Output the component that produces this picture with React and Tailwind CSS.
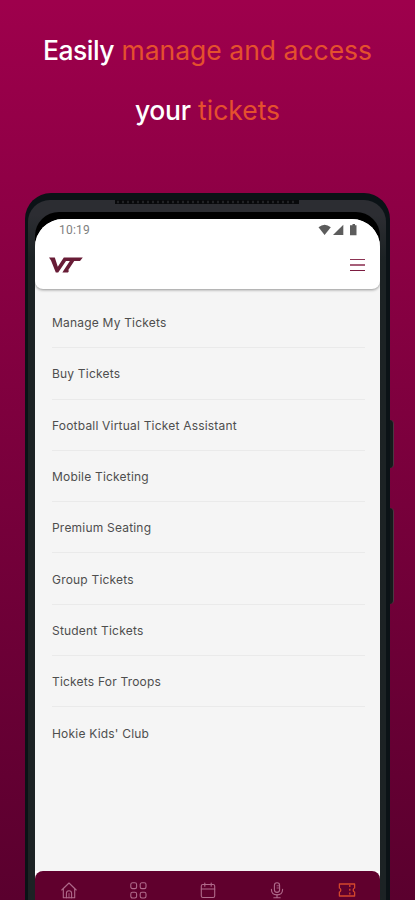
import React from 'react';

const tickets = [
  'Manage My Tickets',
  'Buy Tickets',
  'Football Virtual Ticket Assistant',
  'Mobile Ticketing',
  'Premium Seating',
  'Group Tickets',
  'Student Tickets',
  'Tickets For Troops',
  "Hokie Kids' Club",
];

function HomeIcon() {
  return (
    <svg viewBox="0 0 16 17" className="w-4 h-[17px]" fill="none" stroke="currentColor" strokeWidth="1.1" strokeLinejoin="round" strokeLinecap="round">
      <path d="M0.8 8 L8 1 L15.2 8" />
      <path d="M2.3 7 V15.8 H13.7 V7" />
      <path d="M5.4 15.8 V11.2 Q5.4 8.8 8 8.8 Q10.6 8.8 10.6 11.2 V15.8" />
      <path d="M8 11.5 V15.8" strokeWidth="0.8" />
    </svg>
  );
}

function GridIcon() {
  return (
    <svg viewBox="0 0 17 17" className="w-[17px] h-[17px]" fill="none" stroke="currentColor" strokeWidth="1.1">
      <rect x="0.8" y="0.8" width="5.8" height="5.8" rx="1.7" />
      <rect x="10.2" y="0.8" width="5.8" height="5.8" rx="1.7" />
      <rect x="0.8" y="10.2" width="5.8" height="5.8" rx="1.7" />
      <rect x="10.2" y="10.2" width="5.8" height="5.8" rx="1.7" />
    </svg>
  );
}

function CalendarIcon() {
  return (
    <svg viewBox="0 0 16 17" className="w-4 h-[17px]" fill="none" stroke="currentColor" strokeWidth="1.1" strokeLinecap="round">
      <rect x="1.3" y="2.5" width="13.4" height="13" rx="1.6" />
      <path d="M1.3 7 H14.7" />
      <path d="M4.8 1 V4.3 M11.2 1 V4.3" />
    </svg>
  );
}

function MicIcon() {
  return (
    <svg viewBox="0 0 16 17" className="w-4 h-[17px]" fill="none" stroke="currentColor" strokeWidth="1.1" strokeLinecap="round">
      <rect x="5.4" y="0.8" width="5.2" height="9.6" rx="2.6" />
      <path d="M8 3.8 H10 M8 6 H10" strokeWidth="0.8" />
      <path d="M2.4 7.4 Q2.6 12.8 8 12.9 Q13.4 12.8 13.6 7.4" />
      <path d="M8 12.9 V15.8 M4.8 15.8 H11.2" />
    </svg>
  );
}

function TicketIcon() {
  return (
    <svg viewBox="0 0 18 14" className="w-[18px] h-3.5" fill="none" stroke="currentColor" strokeWidth="1.3" strokeLinejoin="round">
      <path d="M1.4 1 H16.6 V5 Q15.2 5.4 15.2 7 Q15.2 8.6 16.6 9 V13 H1.4 V9 Q2.8 8.6 2.8 7 Q2.8 5.4 1.4 5 Z" />
      <path d="M11.8 2 V13" strokeDasharray="2 1.8" />
    </svg>
  );
}

function Logo() {
  return (
    <svg viewBox="0 0 34 16" className="w-[34px] h-4" fill="#681c36">
      {/* V */}
      <path d="M0 0.4 H5.8 L8.8 9.8 L14.8 0.4 H33.8 L31 4 H17 L9.2 15.4 H6.8 L2 3.4 Z" />
      {/* T stem */}
      <path d="M21 3.8 H25.4 L19 13.6 H20.2 L19 15.4 H13.4 L14.6 13.6 Z" />
    </svg>
  );
}

function StatusBar() {
  return (
    <div className="flex items-center justify-between h-[23px] pl-6 pr-[22px] text-[#808080]">
      <span className="font-[Roboto,sans-serif] text-xs tracking-[0.2px]">10:19</span>
      <svg viewBox="0 0 40 12" className="w-10 h-3" fill="#5c5c5c">
        <path d="M0.5 3.2 Q6.6 -1.8 12.8 3.2 L6.6 11 Z" />
        <path d="M25.3 0.8 V11 H15 Z" />
        <path d="M33 1.3 H34.5 V0 H37 V1.3 H38.5 V11.3 H32 V1.3 Z" />
      </svg>
    </div>
  );
}

export default function App() {
  return (
    <div className="w-full h-[900px] overflow-hidden bg-gradient-to-b from-[#9e004c] to-[#5a002e] font-[Inter,sans-serif]">
      <h1 className="h-[193px] pt-5 text-center text-[26.5px] leading-[60px] text-[#e4502e] font-normal whitespace-nowrap">
        <span className="text-white font-medium tracking-[-0.5px]">Easily</span> manage and access
        <br />
        <span className="text-white font-medium tracking-[-0.3px]">your</span> tickets
      </h1>

      <div className="flex ml-[25px]">
        {/* Phone body */}
        <div className="w-[365px] h-[740px] shrink-0 rounded-t-[26px] bg-[#0b1216] pl-[3px] pr-[4px] pt-[7px]">
          <div className="h-[733px] rounded-t-[22px] bg-gradient-to-b from-[#2c2d32] from-2% to-[#1c2224] to-8%">
            <div className="h-3 flex justify-center">
              <svg viewBox="0 0 184 4" className="w-[184px] h-1">
                <rect width="184" height="4" fill="#08090b" />
                <path d="M2 2 H182" stroke="#222326" strokeWidth="2.5" strokeDasharray="2 3" />
              </svg>
            </div>

            <div className="ml-[7px] w-[345px] h-[720px] rounded-t-[24px] bg-black pt-[6.5px]">
              <div className="h-[714px] rounded-t-[28px] bg-[#f5f5f5] overflow-hidden flex flex-col">
                <div className="h-[70px] shrink-0 bg-white rounded-b-lg shadow-[0_1px_3px_rgba(0,0,0,0.4)]">
                  <StatusBar />
                  <div className="flex items-center justify-between pl-[14px] pr-[15.5px] h-[47px]">
                    <Logo />
                    <div className="w-[15px] flex flex-col gap-1">
                      <span className="h-[1.5px] bg-[#8c3454]" />
                      <span className="h-[1.5px] bg-[#a65f79]" />
                      <span className="h-[1.5px] bg-[#7c1c40]" />
                    </div>
                  </div>
                </div>

                <ul className="ml-[17px] mr-[15px] pt-[8.5px] h-[582px] shrink-0">
                  {tickets.map((name) => (
                    <li
                      key={name}
                      className="h-[51.3px] pt-[2px] flex items-center text-xs tracking-[0.2px] text-[#4e4e4e] border-b border-[#eaeaea] last:border-b-0"
                    >
                      {name}
                    </li>
                  ))}
                </ul>

                <div className="bg-white shrink-0">
                  <nav className="h-[62px] rounded-t-lg bg-[#60002d] pt-[11px] flex items-start justify-between text-[#b06a8b]">
                    <div className="w-[67px] flex justify-center"><HomeIcon /></div>
                    <div className="w-[72px] flex justify-center"><GridIcon /></div>
                    <div className="w-[67px] flex justify-center"><CalendarIcon /></div>
                    <div className="w-[72px] flex justify-center"><MicIcon /></div>
                    <div className="w-[67px] flex justify-center pt-[1px] text-[#d4472c]"><TicketIcon /></div>
                  </nav>
                </div>
              </div>
            </div>
          </div>
        </div>

        {/* Side buttons */}
        <div className="w-[4px] pt-[227px] flex flex-col gap-10">
          <div className="h-12 rounded-r-sm bg-[#15191b] border-r border-[#4a3a42]" />
          <div className="h-24 rounded-r-sm bg-[#15191b] border-r border-[#4a3a42]" />
        </div>
      </div>
    </div>
  );
}
